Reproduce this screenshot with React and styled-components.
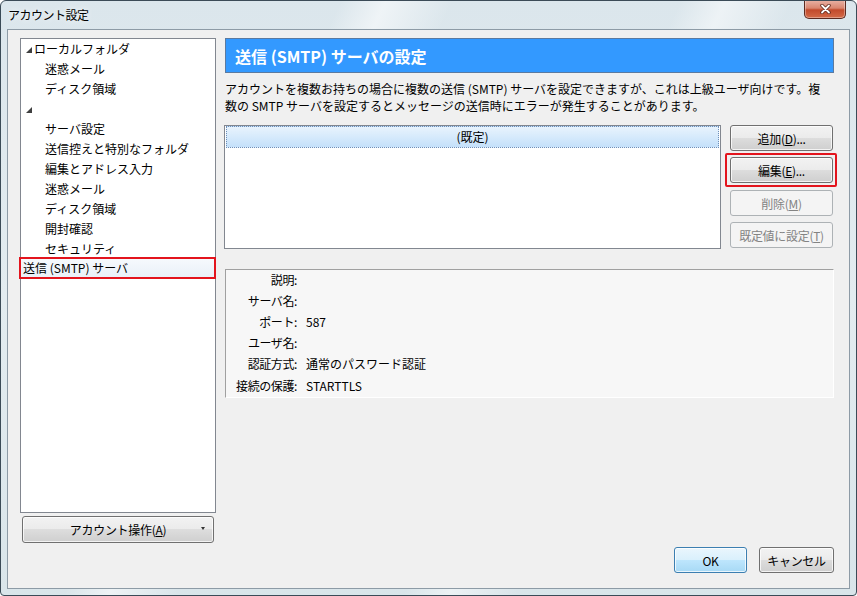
import React from "react";
import styled, { createGlobalStyle } from "styled-components";

const Global = createGlobalStyle`
  html, body { margin: 0; padding: 0; background: #ffffff; }
  body { font-family: "Noto Sans CJK JP", "Noto Sans", sans-serif; font-size: 12px; color: #000; }
  * { box-sizing: border-box; }
`;

const Frame = styled.div`
  width: 857px;
  height: 596px;
  display: flex;
  flex-direction: column;
  border: 1px solid #3b4b57;
  border-radius: 6px 6px 4px 4px;
  background:
    linear-gradient(115deg, rgba(255,255,255,0) 0%, rgba(255,255,255,0) 30%, rgba(255,255,255,0.55) 34%, rgba(255,255,255,0) 40%, rgba(255,255,255,0) 60%, rgba(255,255,255,0.5) 64%, rgba(255,255,255,0) 70%),
    linear-gradient(180deg, #dbe6ec 0%, #e3ecf0 50%, #d9e5ea 100%);
  overflow: hidden;
`;

const TitleBar = styled.div`
  height: 28px;
  flex: none;
  display: flex;
  align-items: flex-start;
  justify-content: space-between;
  padding-left: 7px;
`;

const TitleText = styled.div`
  font-size: 12px;
  line-height: 12px;
  margin-top: 8px;
  color: #000;
  text-shadow: 0 0 6px #ffffff;
  letter-spacing: -0.5px;
`;

const CloseBtn = styled.div`
  width: 42px;
  height: 19px;
  margin-right: 10px;
  margin-top: -1px;
  border: 1px solid #5c2a20;
  border-top: none;
  border-radius: 0 0 5px 5px;
  background: linear-gradient(180deg, #e9b3a6 0%, #d98670 45%, #c24a2c 55%, #d36a47 100%);
  box-shadow: inset 0 0 0 1px rgba(255,255,255,0.35);
  display: flex;
  align-items: center;
  justify-content: center;
`;

const Client = styled.div`
  flex: 1;
  margin: 0 6px 6px 6px;
  border: 1px solid #8d9ba6;
  background: #f0f0f0;
  display: flex;
  padding: 8px 15px 15px 12px;
  gap: 9px;
`;

const LeftCol = styled.div`
  width: 196px;
  display: flex;
  flex-direction: column;
  gap: 3px;
  padding-bottom: 30px;
`;

const Tree = styled.div`
  flex: 1;
  background: #fff;
  border: 1px solid #828790;
  padding-top: 0;
`;

const TreeItem = styled.div`
  height: 20px;
  line-height: 20px;
  display: flex;
  align-items: center;
  padding-left: ${(p) => p.$indent}px;
  white-space: nowrap;
  ${(p) =>
    p.$selected &&
    `
    margin: -2px -1px 0 -2px;
    padding-left: ${p.$indent + 1}px;
    height: 22px;
    border: 2px solid #e3141d;
    background: linear-gradient(180deg, #f6f9fd 0%, #e9f0f8 100%);
  `}
`;

const Arrow = styled.svg`
  width: 6px;
  height: 6px;
  margin-right: 2px;
  margin-top: 2px;
  flex: none;
`;

const Btn = styled.div`
  height: ${(p) => p.$h || 26}px;
  width: ${(p) => (p.$w ? `${p.$w}px` : "auto")};
  margin: ${(p) => p.$m || "0"};
  border: 1px solid ${(p) => (p.$disabled ? "#adb2b5" : p.$default ? "#3c7fb1" : "#707070")};
  border-radius: 3px;
  background: ${(p) =>
    p.$disabled
      ? "#f4f4f4"
      : p.$default
      ? "linear-gradient(180deg, #eaf6fd 0%, #d9f0fc 50%, #bee6fd 50%, #a7d9f5 100%)"
      : "linear-gradient(180deg, #f2f2f2 0%, #ebebeb 50%, #dddddd 50%, #cfcfcf 100%)"};
  box-shadow: inset 0 0 0 1px ${(p) => (p.$disabled ? "transparent" : "rgba(255,255,255,0.75)")};
  color: ${(p) => (p.$disabled ? "#838383" : "#000")};
  display: flex;
  align-items: center;
  justify-content: center;
  font-size: 12px;
  position: relative;
  white-space: nowrap;
  letter-spacing: -0.3px;
`;

const DropMark = styled.span`
  position: absolute;
  right: 8px;
  top: 10px;
  width: 0;
  height: 0;
  border-left: 2px solid transparent;
  border-right: 2px solid transparent;
  border-top: 3px solid #333;
`;

const U = styled.span`
  text-decoration: underline;
`;

const RightCol = styled.div`
  flex: 1;
  display: flex;
  flex-direction: column;
`;

const Banner = styled.div`
  height: 35px;
  background: #3399ff;
  border: 1px solid #5b7aa0;
  color: #fff;
  font-weight: bold;
  font-size: 16px;
  display: flex;
  align-items: center;
  padding-left: 9px;
`;

const Desc = styled.p`
  margin: 7px 0 0 0;
  line-height: 17px;
  font-size: 12px;
  letter-spacing: 0;
  white-space: nowrap;
`;

const ListRow = styled.div`
  margin-top: 11px;
  display: flex;
  gap: 9px;
  margin-left: -1px;
`;

const ListBox = styled.div`
  width: 497px;
  height: 124px;
  background: #fff;
  border: 1px solid #828790;
  padding: 0 1px;
`;

const ListItem = styled.div`
  height: 22px;
  border: 1px dotted #6f8fb8;
  background: linear-gradient(180deg, #e8f3fd 0%, #d6eafc 50%, #c4e0fa 100%);
  display: flex;
  align-items: center;
  justify-content: center;
  padding-bottom: 1px;
`;

const BtnCol = styled.div`
  width: 103px;
  display: flex;
  flex-direction: column;
  gap: 6px;
`;

const Highlight = styled.div`
  margin: -4px -4px -3px -5px;
  padding: 2px 2px 2px 3px;
  border: 2px solid #e3141d;
  border-radius: 2px;
`;

const Details = styled.div`
  margin-top: 20px;
  height: 129px;
  background: #f7f7f7;
  border-top: 1px solid #a0a0a0;
  border-left: 1px solid #a0a0a0;
  border-right: 1px solid #ffffff;
  border-bottom: 1px solid #ffffff;
  display: grid;
  grid-template-columns: 71px 1fr;
  grid-auto-rows: 21.2px;
  column-gap: 9px;
  align-items: center;
`;

const Label = styled.div`
  text-align: right;
  white-space: nowrap;
  letter-spacing: -0.4px;
  padding-bottom: 3px;
`;

const Value = styled.div`
  white-space: nowrap;
  padding-bottom: 3px;
`;

const Spacer = styled.div`
  flex: 1;
`;

const Footer = styled.div`
  display: flex;
  justify-content: flex-end;
  gap: 12px;
`;

const tree = [
  { t: "ローカルフォルダ", i: 5, arrow: true },
  { t: "迷惑メール", i: 24 },
  { t: "ディスク領域", i: 24 },
  { t: "", i: 5, arrow: true },
  { t: "サーバ設定", i: 24 },
  { t: "送信控えと特別なフォルダ", i: 24 },
  { t: "編集とアドレス入力", i: 24 },
  { t: "迷惑メール", i: 24 },
  { t: "ディスク領域", i: 24 },
  { t: "開封確認", i: 24 },
  { t: "セキュリティ", i: 24 },
  { t: "送信 (SMTP) サーバ", i: 1, selected: true },
];

const details = [
  ["説明:", ""],
  ["サーバ名:", ""],
  ["ポート:", "587"],
  ["ユーザ名:", ""],
  ["認証方式:", "通常のパスワード認証"],
  ["接続の保護:", "STARTTLS"],
];

export default function App() {
  return (
    <>
      <Global />
      <Frame>
        <TitleBar>
          <TitleText>アカウント設定</TitleText>
          <CloseBtn>
            <svg width="11" height="10" viewBox="0 0 11 10">
              <path d="M2 1.5 L9 8.5 M9 1.5 L2 8.5" stroke="#5a2418" strokeWidth="3.4" strokeLinecap="round" />
              <path d="M2 1.5 L9 8.5 M9 1.5 L2 8.5" stroke="#ffffff" strokeWidth="1.8" strokeLinecap="round" />
            </svg>
          </CloseBtn>
        </TitleBar>
        <Client>
          <LeftCol>
            <Tree>
              {tree.map((n, k) => (
                <TreeItem key={k} $indent={n.i} $selected={n.selected}>
                  {n.arrow && (
                    <Arrow viewBox="0 0 6 6">
                      <path d="M6 0 L6 6 L0 6 Z" fill="#404040" />
                    </Arrow>
                  )}
                  {n.t}
                </TreeItem>
              ))}
            </Tree>
            <Btn $h={27} $m="0 2px">
              アカウント操作(<U>A</U>)
              <DropMark />
            </Btn>
          </LeftCol>
          <RightCol>
            <Banner>送信 (SMTP) サーバの設定</Banner>
            <Desc>
              アカウントを複数お持ちの場合に複数の送信 (SMTP) サーバを設定できますが、これは上級ユーザ向けです。複
              <br />
              数の SMTP サーバを設定するとメッセージの送信時にエラーが発生することがあります。
            </Desc>
            <ListRow>
              <ListBox>
                <ListItem>(既定)</ListItem>
              </ListBox>
              <BtnCol>
                <Btn>
                  追加(<U>D</U>)...
                </Btn>
                <Highlight>
                  <Btn>
                    編集(<U>E</U>)...
                  </Btn>
                </Highlight>
                <Btn $disabled>
                  削除(<U>M</U>)
                </Btn>
                <Btn $disabled>
                  既定値に設定(<U>T</U>)
                </Btn>
              </BtnCol>
            </ListRow>
            <Details>
              {details.map(([l, v]) => (
                <React.Fragment key={l}>
                  <Label>{l}</Label>
                  <Value>{v}</Value>
                </React.Fragment>
              ))}
            </Details>
            <Spacer />
            <Footer>
              <Btn $w={73} $default>
                OK
              </Btn>
              <Btn $w={75}>キャンセル</Btn>
            </Footer>
          </RightCol>
        </Client>
      </Frame>
    </>
  );
}
